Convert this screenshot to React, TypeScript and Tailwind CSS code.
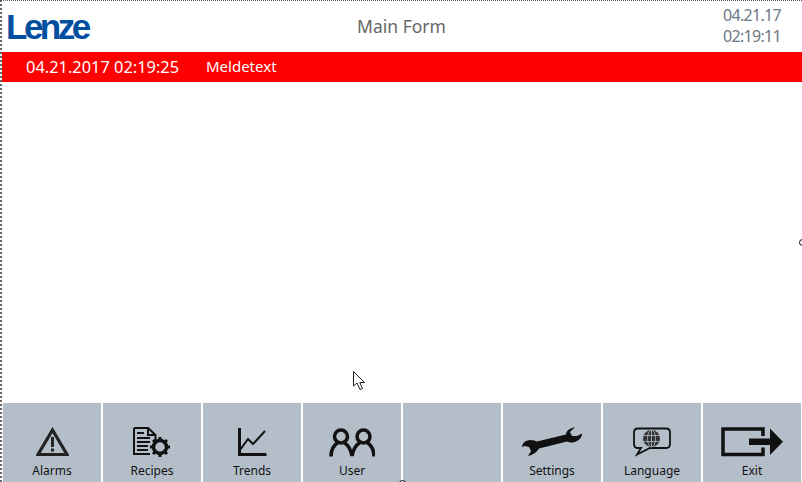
const font = "font-['Noto_Sans',sans-serif]";

const AlarmIcon = () => (
  <svg width="33" height="30" viewBox="0 0 33 30">
    <path d="M16.5 3 L31 27.5 H2 Z" fill="none" stroke="#222" strokeWidth="3.2" strokeLinejoin="miter" />
    <rect x="15" y="10" width="3" height="10" fill="#222" />
    <rect x="15" y="21.5" width="3" height="3" fill="#222" />
  </svg>
);

const RecipeIcon = () => (
  <svg width="38" height="30" viewBox="0 0 38 30">
    <path d="M1 1 H15 L22.5 8 V14 M15 1 V8 H22.5 M17 27 H1 V1" fill="none" stroke="#111" strokeWidth="2" />
    <path d="M4 6 H11 M4 11 H17 M4 15 H17 M4 19 H15 M4 23 H15" stroke="#111" strokeWidth="2" fill="none" />
    <circle cx="27" cy="20" r="6.5" fill="none" stroke="#111" strokeWidth="3.5" />
    <path
      d="M27 10 V13 M27 27 V30 M17 20 H20 M34 20 H37 M20 13 L22 15 M32 25 L34 27 M20 27 L22 25 M32 15 L34 13"
      stroke="#111"
      strokeWidth="3"
      fill="none"
    />
  </svg>
);

const TrendIcon = () => (
  <svg width="30" height="30" viewBox="0 0 30 30">
    <path d="M2.5 1 V27.5 H29.5" fill="none" stroke="#111" strokeWidth="3" />
    <path d="M3 23 L11 12 L16 17 L28 4" fill="none" stroke="#111" strokeWidth="2" />
  </svg>
);

const UserIcon = () => (
  <svg width="46" height="30" viewBox="0 0 46 30">
    <g fill="none" stroke="#111" strokeWidth="3.5">
      <circle cx="12" cy="9.5" r="6.5" />
      <circle cx="34.5" cy="9.5" r="6.5" />
      <path d="M2 29.5 C2 22 5 18 9 15.5 M15 15.5 C19 18 22 23 23 29 C24 23 27 18 31 15.5 M38 15.5 C42 18 45 22 45 29.5" />
    </g>
  </svg>
);

const WrenchIcon = () => (
  <svg width="60" height="29" viewBox="0 0 60 29">
    <path
      d="M4 14 C8 12 12 13 15 14.5 L44 7.5 C44 4 48 1 53 .3 L48 5 L50 9 L55 9 L60 6.5 C60 11 56 15 50 15.5 C48 15.5 46 15 45 14.5 L17 21.5 C15 25 11 28 6 29 L9 24 L7 20 L3 19 L0 20 C0 17 2 15 4 14 Z"
      fill="#111"
    />
  </svg>
);

const LanguageIcon = () => (
  <svg width="40" height="30" viewBox="0 0 40 30">
    <path
      d="M6 1.5 H34 Q38 1.5 38 5.5 V17 Q38 21 34 21 H18 L5 27.5 L9 21 H6 Q2 21 2 17 V5.5 Q2 1.5 6 1.5 Z"
      fill="none"
      stroke="#111"
      strokeWidth="1.8"
    />
    <circle cx="19.5" cy="11.5" r="8.5" fill="#333" />
    <g fill="none" stroke="#b3bec9" strokeWidth=".8">
      <ellipse cx="19.5" cy="11.5" rx="4" ry="8.5" />
      <path d="M19.5 3 V20 M11.5 8.5 H27.5 M11.5 14.5 H27.5" />
    </g>
  </svg>
);

const ExitIcon = () => (
  <svg width="62" height="30" viewBox="0 0 62 30">
    <path d="M42 9 V2 H2 V27.5 H42 V20.5" fill="none" stroke="#111" strokeWidth="3.5" />
    <path d="M28 11.5 H49 V1.5 L62 14.7 L49 28 V18 H28 Z" fill="#111" />
  </svg>
);

const buttons = [
  { label: "Alarms", icon: <AlarmIcon /> },
  { label: "Recipes", icon: <RecipeIcon /> },
  { label: "Trends", icon: <TrendIcon /> },
  { label: "User", icon: <UserIcon /> },
  { label: "", icon: null },
  { label: "Settings", icon: <WrenchIcon /> },
  { label: "Language", icon: <LanguageIcon /> },
  { label: "Exit", icon: <ExitIcon /> },
];

export default function App() {
  return (
    <div className={`relative flex h-[482px] w-[802px] flex-col overflow-hidden bg-white ${font}`}>
      {/* dotted selection frame */}
      <div className="absolute left-0 top-0 h-full w-[2px] border-l-2 border-dotted border-[#666]" />
      <div className="absolute left-0 top-0 h-px w-full border-t border-dotted border-[#555]" />

      <div className="flex h-[52px] items-center pl-[6px] pr-[21px]">
        <div className="w-[337px] font-['Liberation_Sans',sans-serif] text-[35px] font-bold leading-none tracking-[-3.5px] text-[#004f9f]">
          Lenze
        </div>
        <div className="w-[117px] text-center text-[17.5px] text-[#666]">Main Form</div>
        <div className="ml-auto text-right text-[16px] leading-[21px] tracking-[-0.7px] text-[#6b7785]">
          <div>04.21.17</div>
          <div>02:19:11</div>
        </div>
      </div>

      <div className="ml-[2px] flex h-[30px] items-center bg-[#ff0000] pl-6 text-[15px] text-white">
        <span className="w-[180px] text-[16.4px]">04.21.2017 02:19:25</span>
        <span className="-mt-px">Meldetext</span>
      </div>

      <div className="flex-1" />

      <div className="flex h-[79px] gap-[2px] pl-[3px]">
        {buttons.map((b, i) => (
          <div key={i} className="flex w-[98px] flex-col items-center bg-[#b3bec9] pt-6">
            <div className="flex h-[30px] items-start justify-center">{b.icon}</div>
            <div className="mt-[6px] text-[12px] leading-4 text-[#111]">{b.label}</div>
          </div>
        ))}
      </div>

      {/* mouse pointer */}
      <svg className="absolute left-[353px] top-[371px]" width="13" height="20" viewBox="0 0 13 20">
        <path d="M.5 .5 V15 L4 12 L7 18.5 L9.5 17.5 L6.8 11.5 H11.5 Z" fill="white" stroke="#222" strokeWidth="1" />
      </svg>
      {/* resize handles */}
      <div className="absolute left-[799px] top-[239px] h-[7px] w-[7px] rounded-full border border-black bg-white" />
      <div className="absolute left-[399px] top-[480px] h-[7px] w-[7px] rounded-full border border-black bg-white" />
    </div>
  );
}
